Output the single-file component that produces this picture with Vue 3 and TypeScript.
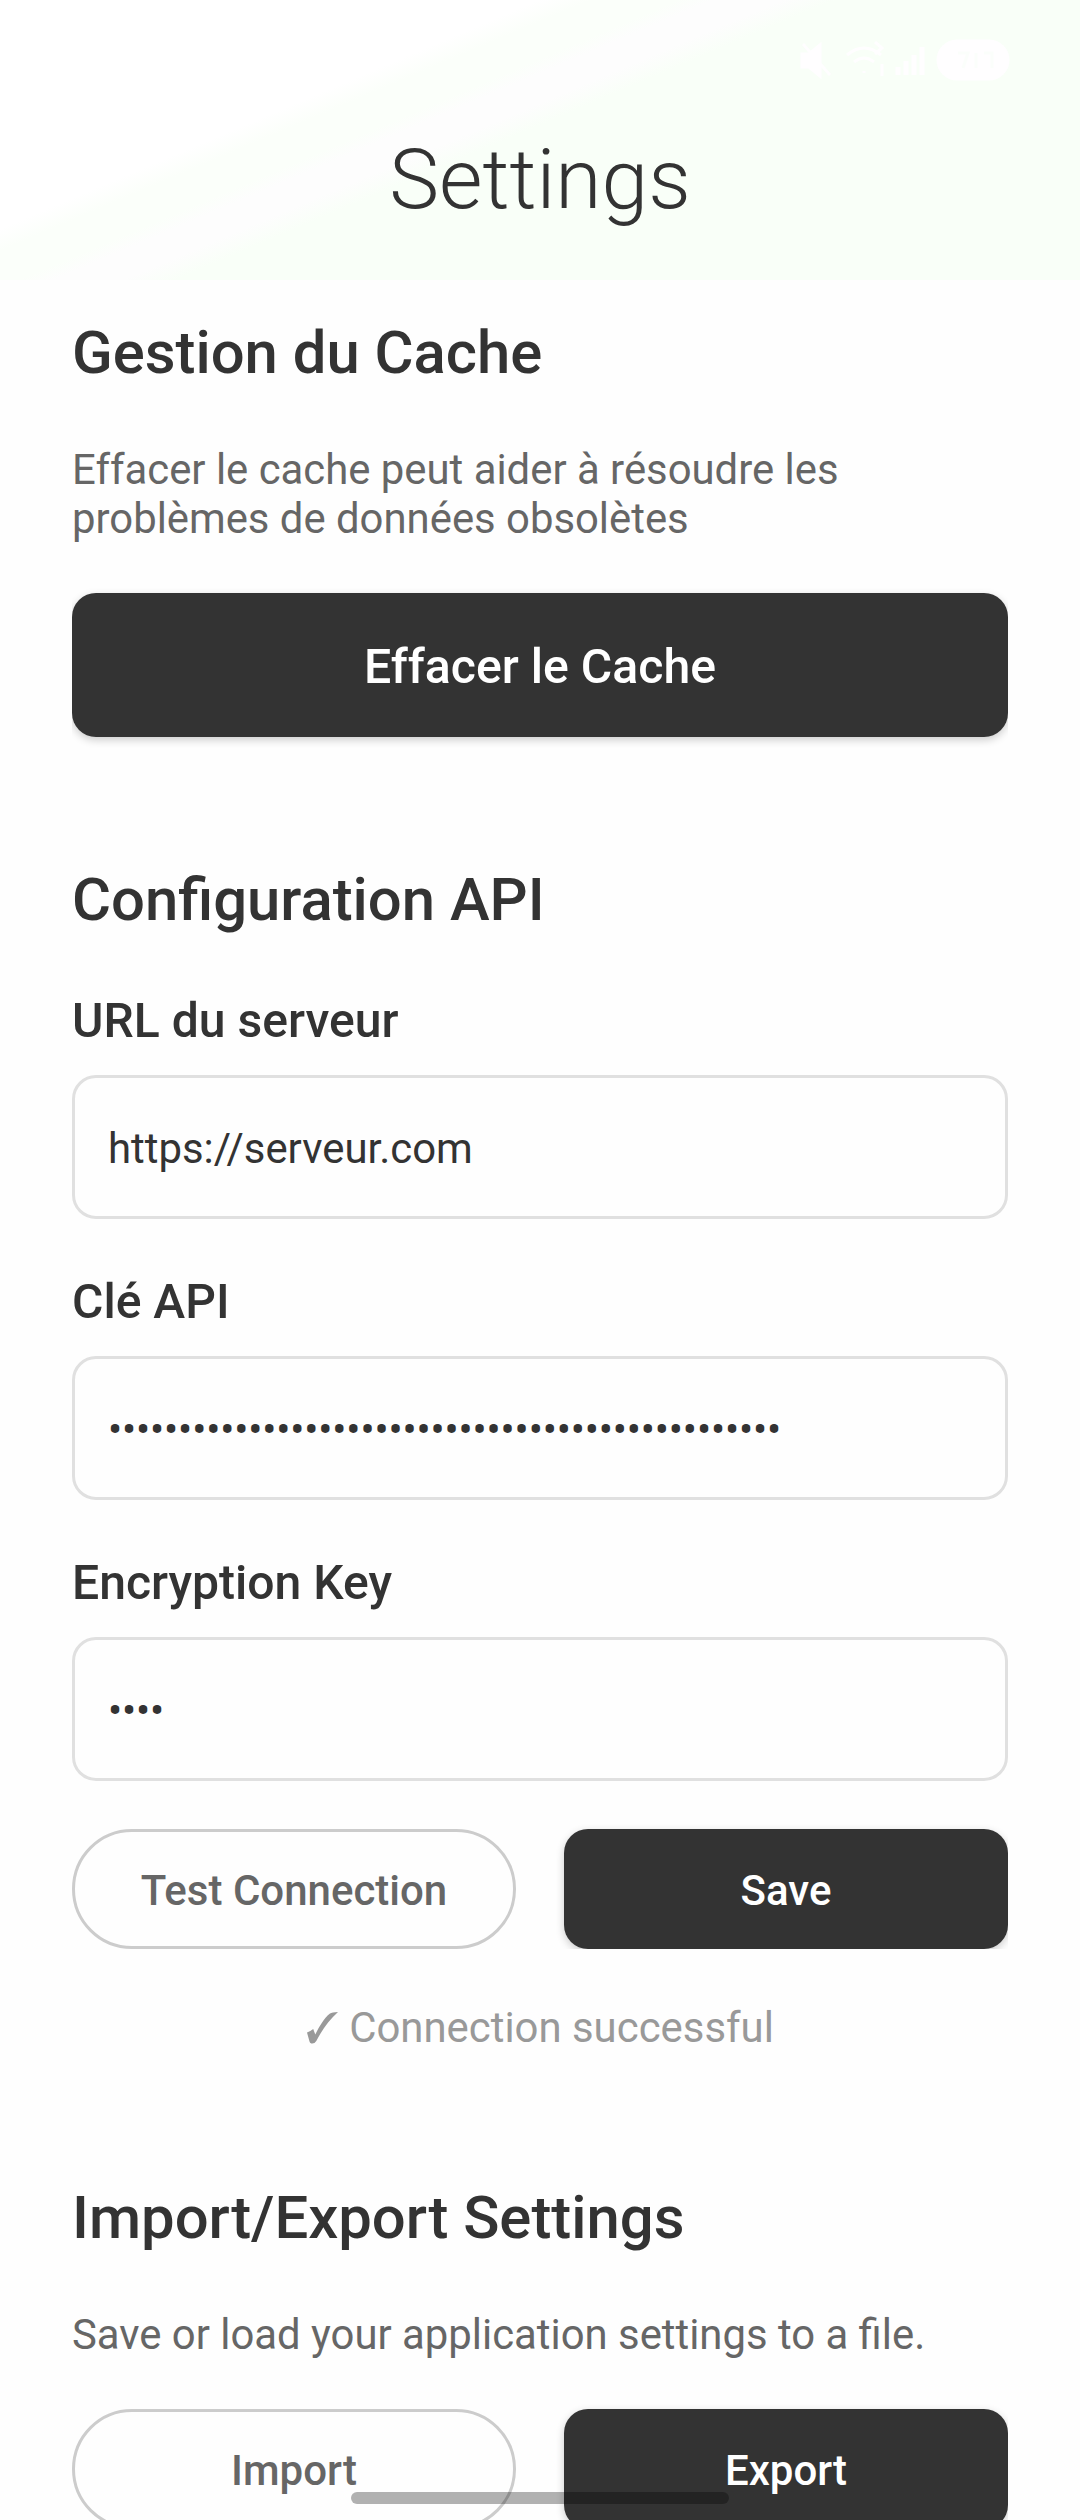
<script setup lang="ts">
import { ref } from 'vue'

interface Field {
  id: string
  label: string
  value: string
  secret: boolean
}

const fields = ref<Field[]>([
  { id: 'url', label: 'URL du serveur', value: 'https://serveur.com', secret: false },
  { id: 'api', label: 'Clé API', value: '•'.repeat(48), secret: true },
  { id: 'enc', label: 'Encryption Key', value: '•'.repeat(4), secret: true },
])
</script>

<template>
  <div class="screen">
    <header class="header">
      <div class="status-icons">
        <svg width="212" height="48" viewBox="0 0 212 48" fill="none" stroke="#fffeff" stroke-width="3">
          <path d="M2 18h7l11-9v31l-11-9H2z" fill="#fffeff" />
          <path d="M3 8l27 31" />
          <path d="M47 19q17-14 34 0M54 26q10-8 20 0M64 35v2M75 6l7 6-7 6M82 28v12" />
          <path d="M98 39v-8M106 39V25M114 39V19M122 39V11" stroke-width="5" />
          <rect x="138" y="5" width="70" height="38" rx="19" fill="#fffeff" />
          <path d="M158 17h10l-5 15M176 17v15M184 17h8v15" stroke="#fbfefb" />
        </svg>
      </div>
      <h1 class="title">Settings</h1>
    </header>

    <main class="content">
      <section class="section">
        <h2 class="heading">Gestion du Cache</h2>
        <p class="description">Effacer le cache peut aider à résoudre les problèmes de données obsolètes</p>
        <button class="btn primary large" type="button">Effacer le Cache</button>
      </section>

      <section class="section">
        <h2 class="heading">Configuration API</h2>
        <div class="fields">
          <div v-for="field in fields" :key="field.id" class="field">
            <span class="label">{{ field.label }}</span>
            <div class="input" :class="{ secret: field.secret }">{{ field.value }}</div>
          </div>
        </div>
        <div class="row">
          <button class="btn outline" type="button">Test Connection</button>
          <button class="btn primary" type="button">Save</button>
        </div>
        <p class="result">
          <svg class="check" width="31" height="32" viewBox="0 0 31 32">
            <path d="M0 20.500Q3.500 19 6.200 17L8.300 22.500C12 15 17 6 23 1.500Q25 0.300 31 0C22 8 15 18 9.300 29Q7.500 32 4.300 31.500Q2.800 31 2.500 29.500Z" fill="#999" />
          </svg>
          <span>Connection successful</span>
        </p>
      </section>

      <section class="section">
        <h2 class="heading">Import/Export Settings</h2>
        <p class="description">Save or load your application settings to a file.</p>
        <div class="row">
          <button class="btn outline" type="button">Import</button>
          <button class="btn primary" type="button">Export</button>
        </div>
      </section>
    </main>

    <div class="home-bar"></div>
  </div>
</template>

<style>
body {
  margin: 0;
  background: #fefefe;
}
</style>

<style scoped>
.screen {
  position: relative;
  width: 1080px;
  height: 2520px;
  overflow: hidden;
  background: #fefefe;
  color: #333;
  font-family: Roboto, "Liberation Sans", sans-serif;
  font-variant-ligatures: common-ligatures;
}
.header {
  height: 280px;
  box-sizing: border-box;
  padding-top: 36px;
  background: linear-gradient(157deg, #fff 31%, #fbfffa 34%, #fbfffa 39%, #fdfdfd 41%, #fdfdfd 45%, #f9fff8 48%);
}
.status-icons {
  display: flex;
  justify-content: flex-end;
  height: 48px;
  padding-right: 68px;
}
.title {
  margin: 47px 0 0;
  font-size: 84px;
  line-height: 98px;
  font-weight: 300;
  text-align: center;
}
.content {
  display: flex;
  flex-direction: column;
  gap: 128px;
  padding: 38px 72px 0;
}
.section {
  display: flex;
  flex-direction: column;
}
.heading {
  margin: 0;
  font-size: 59.8px;
  line-height: 70px;
  font-weight: 500;
}
.description {
  margin: 57px 0 50px;
  font-size: 41.85px;
  line-height: 49px;
  color: #666;
}
.fields {
  display: flex;
  flex-direction: column;
  gap: 55px;
  margin: 58px 0 48px;
}
.field {
  display: flex;
  flex-direction: column;
  gap: 26px;
}
.label {
  font-size: 48.1px;
  line-height: 56px;
  font-weight: 500;
}
.input {
  display: flex;
  align-items: center;
  height: 144px;
  box-sizing: border-box;
  padding: 2px 33px 0;
  border: 3px solid #e0e0e0;
  border-radius: 24px;
  background: #fefefe;
  font-size: 41.9px;
}
.secret {
  font-size: 42px;
  letter-spacing: -0.15px;
}
.row {
  display: grid;
  grid-template-columns: 1fr 1fr;
  gap: 48px;
}
.btn {
  height: 120px;
  box-sizing: border-box;
  padding: 2px 0 0;
  border: 0;
  font-family: inherit;
  font-size: 42px;
  font-weight: 500;
}
.primary {
  border-radius: 24px;
  background: #333;
  color: #fff;
  box-shadow: 0 3px 8px rgba(0, 0, 0, 0.2);
  clip-path: inset(-8px 0 0 -12px);
}
.large {
  height: 144px;
  font-size: 48.2px;
  clip-path: inset(-8px 0 -16px 0);
}
.outline {
  border: 3px solid #ccc;
  border-radius: 60px;
  background: #fefefe;
  color: #666;
}
.result {
  display: flex;
  justify-content: center;
  align-items: center;
  gap: 11px;
  margin: 54px 0 3px;
  padding-left: 1px;
  font-size: 41.9px;
  line-height: 49px;
  color: #999;
}
.home-bar {
  position: absolute;
  left: 351px;
  top: 2492px;
  width: 378px;
  height: 12px;
  border-radius: 6px;
  background: rgba(0, 0, 0, 0.3);
}
</style>
